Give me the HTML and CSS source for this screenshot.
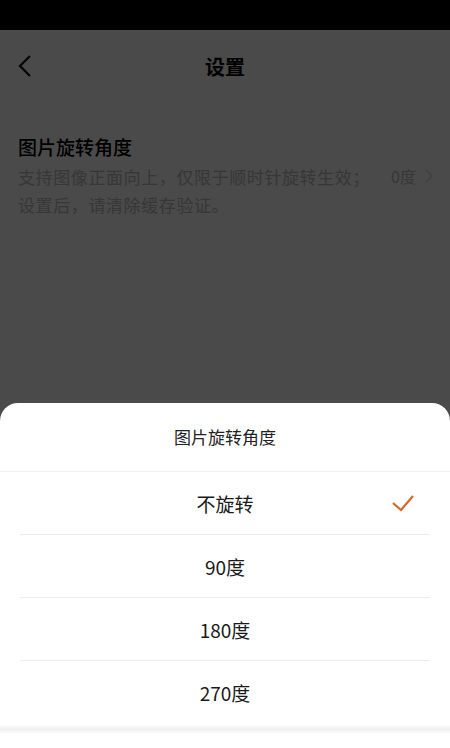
FILE: index.html
```html
<!DOCTYPE html>
<html lang="zh">
<head>
<meta charset="utf-8">
<link rel="stylesheet" href="styles.css">
</head>
<body>
<div class="app">
  <div class="statusbar"></div>
  <div class="header">
    <svg class="back" width="16" height="24" viewBox="0 0 16 24"><polyline points="13,2 3,12 13,22" fill="none" stroke="#111" stroke-width="2.2" stroke-linejoin="miter"/></svg>
    <div class="header-title">设置</div>
  </div>
  <div class="item">
    <div class="item-text">
      <div class="item-title">图片旋转角度</div>
      <div class="item-desc">支持图像正面向上，仅限于顺时针旋转生效；<br>设置后，请清除缓存验证。</div>
    </div>
    <div class="item-value">0度
      <svg class="chev" width="8" height="14" viewBox="0 0 8 14"><polyline points="1,1 7,7 1,13" fill="none" stroke="#d0d0d0" stroke-width="1.4"/></svg>
    </div>
  </div>
  <div class="overlay"></div>
  <div class="sheet">
    <div class="sheet-title">图片旋转角度</div>
    <div class="sheet-list">
      <div class="option">不旋转
        <svg class="check" width="24" height="18" viewBox="0 0 24 18"><polyline points="2,9 10,16 22,2" fill="none" stroke="#d4692d" stroke-width="2.2"/></svg>
      </div>
      <div class="option">90度</div>
      <div class="option">180度</div>
      <div class="option">270度</div>
    </div>
    <div class="sheet-bottom"></div>
  </div>
</div>
</body>
</html>
```
FILE: styles.css
```css
* { box-sizing: border-box; }
html, body { margin: 0; padding: 0; }
body {
  width: 450px;
  height: 748px;
  overflow: hidden;
  font-family: "Noto Sans CJK SC", "Noto Sans", sans-serif;
}
.app {
  position: relative;
  width: 450px;
  height: 748px;
  background: #f7f7f7;
  display: flex;
  flex-direction: column;
}
.statusbar {
  height: 30px;
  background: #000;
  flex: none;
}
.header {
  height: 70px;
  flex: none;
  display: flex;
  align-items: center;
  justify-content: center;
  position: relative;
}
.back {
  position: absolute;
  left: 17px;
  top: 24px;
}
.header-title {
  font-size: 20px;
  font-weight: 700;
  color: #000;
  margin-top: 2px;
}
.item {
  display: flex;
  align-items: center;
  padding: 32px 18px 0 18px;
}
.item-text { flex: 1; }
.item-title {
  font-size: 19px;
  font-weight: 500;
  color: #000;
  line-height: 30px;
}
.item-desc {
  font-size: 17px;
  color: #b8b8b8;
  line-height: 28px;
  letter-spacing: 0.6px;
  margin-top: 1px;
}
.item-value {
  display: flex;
  align-items: center;
  gap: 9px;
  font-size: 16px;
  color: #b8b8b8;
  margin-top: 1px;
  margin-right: -1px;
}
.overlay {
  position: absolute;
  inset: 30px 0 0 0;
  background: rgba(0, 0, 0, 0.7);
}
.sheet {
  position: absolute;
  left: 0;
  right: 0;
  bottom: 0;
  height: 345px;
  background: #fff;
  border-radius: 18px 18px 0 0;
  display: flex;
  flex-direction: column;
}
.sheet-title {
  height: 69px;
  flex: none;
  display: flex;
  align-items: center;
  justify-content: center;
  font-size: 17px;
  color: #222;
  border-bottom: 1px solid #efefef;
  padding-bottom: 2px;
}
.sheet-list {
  padding: 0 20px;
}
.option {
  position: relative;
  height: 63px;
  display: flex;
  align-items: center;
  justify-content: center;
  font-size: 19px;
  color: #1a1a1a;
  border-bottom: 1px solid #ececec;
}
.option:last-child { border-bottom: none; }
.check {
  position: absolute;
  right: 15px;
  top: 22px;
}
.sheet-bottom {
  height: 10px;
  margin-top: 0;
  background: linear-gradient(#ffffff, #efefef 55%, #ffffff);
}
```
